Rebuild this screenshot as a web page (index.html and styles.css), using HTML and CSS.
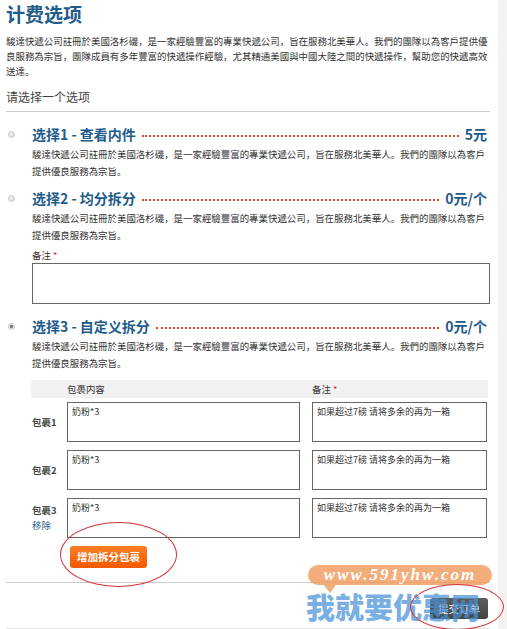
FILE: index.html
```html
<!DOCTYPE html>
<html lang="zh">
<head>
<meta charset="utf-8">
<title>计费选项</title>
<link rel="stylesheet" href="styles.css">
</head>
<body>
<div class="page">
  <div class="main">
    <h1 class="title">计费选项</h1>
    <p class="intro">駿達快遞公司註冊於美國洛杉磯，是一家經驗豐富的專業快遞公司，旨在服務北美華人。我們的團隊以為客戶提供優良服務為宗旨，團隊成員有多年豐富的快遞操作經驗，尤其精通美國與中國大陸之間的快遞操作，幫助您的快遞高效送達。</p>
    <div class="choose">请选择一个选项</div>

    <div class="opt opt1">
      <div class="radio-col"><span class="radio"></span></div>
      <div class="opt-body">
        <div class="opt-head"><span class="opt-name">选择1 - 查看内件</span><span class="dots"></span><span class="price">5元</span></div>
        <p class="desc">駿達快遞公司註冊於美國洛杉磯，是一家經驗豐富的專業快遞公司，旨在服務北美華人。我們的團隊以為客戶提供優良服務為宗旨。</p>
      </div>
    </div>

    <div class="opt opt2">
      <div class="radio-col"><span class="radio"></span></div>
      <div class="opt-body">
        <div class="opt-head"><span class="opt-name">选择2 - 均分拆分</span><span class="dots"></span><span class="price">0元/个</span></div>
        <p class="desc">駿達快遞公司註冊於美國洛杉磯，是一家經驗豐富的專業快遞公司，旨在服務北美華人。我們的團隊以為客戶提供優良服務為宗旨。</p>
        <div class="note-label">备注 <span class="req">*</span></div>
        <textarea class="note-box"></textarea>
      </div>
    </div>

    <div class="opt opt3">
      <div class="radio-col"><span class="radio checked"></span></div>
      <div class="opt-body">
        <div class="opt-head"><span class="opt-name">选择3 - 自定义拆分</span><span class="dots"></span><span class="price">0元/个</span></div>
        <p class="desc">駿達快遞公司註冊於美國洛杉磯，是一家經驗豐富的專業快遞公司，旨在服務北美華人。我們的團隊以為客戶提供優良服務為宗旨。</p>
        <div class="tbl-head"><span class="th-content">包裹内容</span><span class="th-note">备注 <span class="req">*</span></span></div>
        <div class="pkg-row">
          <div class="lbl">包裹1</div>
          <textarea class="pkg-content">奶粉*3</textarea>
          <textarea class="pkg-note">如果超过7磅 请将多余的再为一箱</textarea>
        </div>
        <div class="pkg-row">
          <div class="lbl">包裹2</div>
          <textarea class="pkg-content">奶粉*3</textarea>
          <textarea class="pkg-note">如果超过7磅 请将多余的再为一箱</textarea>
        </div>
        <div class="pkg-row">
          <div class="lbl">包裹3<br><a class="remove">移除</a></div>
          <textarea class="pkg-content">奶粉*3</textarea>
          <textarea class="pkg-note">如果超过7磅 请将多余的再为一箱</textarea>
        </div>
        <button class="add-btn">增加拆分包裹</button>
      </div>
    </div>

    <div class="footer">
      <button class="submit-btn">提交订单</button>
    </div>
  </div>

  <div class="wm-url">www.591yhw.com</div>
  <div class="wm-name">我就要优惠网</div>
  <div class="ring ring1"></div>
  <div class="ring ring2"></div>
</div>
</body>
</html>
```

FILE: styles.css
```css
html, body {
  margin: 0;
  padding: 0;
}
body {
  font-family: "Noto Sans CJK SC", "Noto Sans", sans-serif;
  color: #333;
  background: linear-gradient(to right, #fff 498px, #f3f3f3 498px);
}
.page {
  position: relative;
  width: 507px;
  height: 629px;
  overflow: hidden;
}
.main {
  width: 484px;
  padding-left: 6px;
}
.title {
  margin: 0;
  padding-top: 2px;
  font-size: 19px;
  line-height: 24px;
  font-weight: bold;
  color: #1f5c8b;
}
.intro {
  margin: 8px 0 0;
  font-size: 9.45px;
  line-height: 15px;
  color: #333;
}
.choose {
  margin-top: 10px;
  font-size: 12px;
  line-height: 16px;
  color: #444;
  padding-bottom: 6px;
  border-bottom: 1px solid #cfcfcf;
}
.opt {
  display: flex;
}
.opt1 { margin-top: 12px; }
.opt2 { margin-top: 8px; }
.opt3 { margin-top: 12px; }
.radio-col {
  width: 26px;
  height: 20px;
  display: flex;
  align-items: center;
  flex: none;
}
.radio {
  margin-left: 2px;
  width: 5px;
  height: 5px;
  border-radius: 50%;
  border: 1px solid #c4c4c4;
  background: radial-gradient(circle at 40% 35%, #f4f4f4, #d4d4d4);
}
.radio.checked {
  background: radial-gradient(circle, #777 0, #888 1.5px, #e6e6e6 2px);
}
.opt-body {
  flex: 1;
  min-width: 0;
}
.opt-head {
  display: flex;
  align-items: center;
  height: 20px;
  padding-right: 3px;
  font-size: 14px;
  font-weight: bold;
  color: #1e5c8b;
}
.dots {
  flex: 1;
  height: 0;
  margin: 4px 6px 0;
  border-bottom: 2px dotted #e84d1f;
}
.price {
  color: #1e5a88;
}
.desc {
  margin: 2px 0 0;
  font-size: 9.45px;
  line-height: 17px;
  color: #333;
}
.note-label {
  margin-top: 4px;
  font-size: 9.45px;
  line-height: 14px;
  color: #333;
}
.req {
  color: #d9262c;
}
.note-box {
  display: block;
  margin-top: 1px;
  width: 458px;
  height: 41px;
  box-sizing: border-box;
  border: 1px solid #666;
  resize: none;
  background: #fff;
}
.tbl-head {
  display: flex;
  align-items: center;
  margin-top: 8px;
  margin-left: -1px;
  width: 457px;
  height: 18px;
  background: #f1f1f1;
  font-size: 9.45px;
  color: #333;
}
.th-content {
  margin-left: 36px;
  width: 245px;
}
.pkg-row {
  display: flex;
  align-items: center;
  margin-top: 8px;
}
.pkg-row:first-of-type {
  margin-top: 4px;
}
.tbl-head + .pkg-row {
  margin-top: 4px;
}
.lbl {
  width: 35px;
  flex: none;
  font-size: 9.45px;
  line-height: 15px;
  font-weight: bold;
  color: #444;
}
.remove {
  color: #1e5c8b;
  font-weight: normal;
}
textarea.pkg-content,
textarea.pkg-note {
  box-sizing: border-box;
  height: 40px;
  border: 1px solid #666;
  padding: 3px 4px;
  font-family: "Noto Sans CJK SC", sans-serif;
  font-size: 9px;
  line-height: 12px;
  color: #333;
  resize: none;
  background: #fff;
  margin: 0;
}
.pkg-content {
  width: 233px;
}
.pkg-note {
  width: 175px;
  margin-left: 12px !important;
}
.add-btn {
  display: block;
  margin: 8px 0 0 38px;
  height: 22px;
  padding: 0 7px;
  border: none;
  border-radius: 3px;
  background: linear-gradient(#ff7d25, #f25a00);
  color: #fff;
  font-family: "Noto Sans CJK SC", sans-serif;
  font-size: 10.5px;
  font-weight: bold;
  line-height: 22px;
}
.footer {
  margin-top: 14px;
  padding-top: 15px;
  padding-bottom: 9px;
  border-top: 1px solid #cfcfcf;
  border-bottom: 1px solid #e2e2e2;
  display: flex;
  justify-content: flex-end;
}
.submit-btn {
  margin-right: 2px;
  height: 21px;
  padding: 0 8px;
  border: none;
  border-radius: 3px;
  background: linear-gradient(#5d5d5d, #444);
  color: #fff;
  font-family: "Noto Sans CJK SC", sans-serif;
  font-size: 10.5px;
  line-height: 21px;
}
.wm-url {
  position: absolute;
  left: 308px;
  top: 565px;
  width: 184px;
  height: 20px;
  border-radius: 10px;
  background: rgba(240, 150, 85, 0.78);
  color: #fff;
  font-family: "Liberation Serif", serif;
  font-style: italic;
  font-weight: bold;
  font-size: 17px;
  line-height: 20px;
  letter-spacing: 2px;
  text-align: center;
}
.wm-url::after {
  content: "";
  position: absolute;
  left: 16px;
  top: 20px;
  border-left: 6px solid transparent;
  border-right: 6px solid transparent;
  border-top: 8px solid rgba(240, 150, 85, 0.78);
}
.wm-name {
  position: absolute;
  left: 306px;
  top: 586px;
  font-family: "Noto Sans CJK SC", sans-serif;
  font-size: 29px;
  line-height: 40px;
  font-weight: 900;
  color: rgba(70, 145, 215, 0.72);
  white-space: nowrap;
}
.ring {
  position: absolute;
  border: 1px solid #d6343a;
  border-radius: 50%;
}
.ring1 {
  left: 60px;
  top: 522px;
  width: 115px;
  height: 63px;
}
.ring2 {
  left: 410px;
  top: 584px;
  width: 92px;
  height: 44px;
}
```
